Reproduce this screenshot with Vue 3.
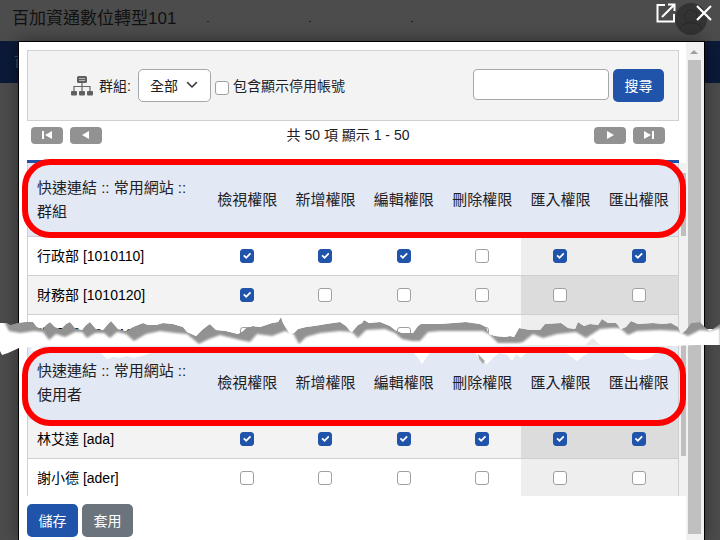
<script setup>
import { ref, reactive } from 'vue'

const actions = ['檢視權限', '新增權限', '編輯權限', '刪除權限', '匯入權限', '匯出權限']

const sections = reactive([
  {
    title: '快速連結 :: 常用網站 :: 群組',
    kind: 'groups',
    rows: [
      { name: '行政部 [1010110]', allowed: [true, true, true, false, true, true] },
      { name: '財務部 [1010120]', allowed: [true, false, false, false, false, false] },
      { name: '資訊部 [1010130]', allowed: [false, false, false, false, false, false] }
    ]
  },
  {
    title: '快速連結 :: 常用網站 :: 使用者',
    kind: 'users',
    rows: [
      { name: '林艾達 [ada]', allowed: [true, true, true, true, true, true] },
      { name: '謝小德 [ader]', allowed: [false, false, false, false, false, false] }
    ]
  }
])

const group = ref('all')
const includeDisabled = ref(false)
const keyword = ref('')
</script>

<template>
  <div class="page">
    <header class="site-header">
      <span class="site-title">百加資通數位轉型101</span>
      <span class="dots"><i></i><i></i><i></i></span>
      <svg class="avatar" viewBox="0 0 32 32" aria-hidden="true">
        <circle cx="16" cy="16" r="16" fill="#333" />
        <circle cx="16" cy="13" r="6" fill="none" stroke="#2a2a2a" />
        <path d="M5 26c2-5 6-6 11-6s9 1 11 6" fill="none" stroke="#2a2a2a" />
      </svg>
    </header>
    <nav class="site-nav">首頁</nav>

    <section class="dialog" role="dialog">
      <div class="window-actions">
        <button type="button" aria-label="在新視窗開啟">
          <svg width="20" height="20" viewBox="0 0 20 20" fill="none" stroke="#fff" stroke-width="2">
            <path d="M9 2H1.500V18.500H18V11M12 1.500H18.500V8M18 2L6 14" />
          </svg>
        </button>
        <button type="button" aria-label="關閉">
          <svg width="16" height="16" viewBox="0 0 16 16" fill="none" stroke="#fff" stroke-width="2.200">
            <path d="M1 1L15 15M15 1L1 15" />
          </svg>
        </button>
      </div>

      <div class="content">
        <form class="filters" @submit.prevent>
          <svg class="org" width="22" height="20" viewBox="0 0 22 20" aria-hidden="true">
            <rect x="6" y="0" width="10" height="7" rx="1.500" fill="#606060" />
            <path d="M8 2.500h6M8 4.500h6" stroke="#b5b5b5" />
            <path d="M11 7v8M3 15v-4.500h16V15" fill="none" stroke="#666" stroke-width="1.200" />
            <g fill="#606060">
              <rect x="0" y="15" width="6" height="4.500" rx="1" />
              <rect x="8" y="15" width="6" height="4.500" rx="1" />
              <rect x="16" y="15" width="6" height="4.500" rx="1" />
            </g>
          </svg>
          <label class="group-label" for="group">群組:</label>
          <span class="select">
            <select id="group" v-model="group">
              <option value="all">全部</option>
            </select>
            <svg width="12" height="8" viewBox="0 0 12 8" fill="none" stroke="#333a40" stroke-width="1.600" stroke-linecap="round" stroke-linejoin="round">
              <path d="M1.500 1.500L6 6L10.500 1.500" />
            </svg>
          </span>
          <input id="disabled" v-model="includeDisabled" class="check low" type="checkbox" />
          <label class="grow" for="disabled">包含顯示停用帳號</label>
          <input v-model="keyword" class="keyword" type="text" aria-label="搜尋" />
          <button class="btn primary" type="submit">搜尋</button>
        </form>

        <div class="pager">
          <button type="button" aria-label="第一頁">
            <svg width="12" height="8" viewBox="0 0 12 8"><path d="M1 0h2v8H1zM11 0v8L4 4z" fill="#fff" /></svg>
          </button>
          <button type="button" aria-label="上一頁">
            <svg width="8" height="8" viewBox="0 0 8 8"><path d="M7 0v8L0 4z" fill="#fff" /></svg>
          </button>
          <span class="count">共 50 項 顯示 1 - 50</span>
          <button type="button" aria-label="下一頁">
            <svg width="8" height="8" viewBox="0 0 8 8"><path d="M1 0v8L8 4z" fill="#fff" /></svg>
          </button>
          <button type="button" aria-label="最後一頁">
            <svg width="12" height="8" viewBox="0 0 12 8"><path d="M9 0h2v8H9zM1 0v8l7-4z" fill="#fff" /></svg>
          </button>
        </div>

        <div class="permissions">
          <div class="tables">
            <div v-for="section in sections" :key="section.kind" class="block" :class="section.kind">
              <table>
                <thead>
                  <tr>
                    <th class="name" scope="col">{{ section.title }}</th>
                    <th v-for="action in actions" :key="action" scope="col">{{ action }}</th>
                  </tr>
                </thead>
                <tbody>
                  <tr v-for="row in section.rows" :key="row.name">
                    <td class="name">{{ row.name }}</td>
                    <td v-for="(action, i) in actions" :key="action" :class="{ transfer: i > 3 }">
                      <input v-model="row.allowed[i]" class="check" type="checkbox" :aria-label="row.name + ' ' + action" />
                    </td>
                  </tr>
                </tbody>
              </table>
            </div>
          </div>
          <div class="inner-track"><i class="upper"></i><i class="lower"></i></div>
        </div>

        <footer class="footer">
          <button class="btn primary" type="button">儲存</button>
          <button class="btn secondary" type="button">套用</button>
        </footer>
      </div>

      <div class="scrollbar" aria-hidden="true">
        <svg width="8" height="4" viewBox="0 0 8 4"><path d="M4 0l4 4H0z" fill="#a0a0a0" /></svg>
        <i></i>
      </div>
    </section>

    <!-- Torn gap between the two parts of the list -->
    <svg class="tear" viewBox="0 315 720 55" preserveAspectRatio="none" aria-hidden="true">
      <defs>
        <filter id="soft" x="-5%" y="-40%" width="110%" height="180%"><feGaussianBlur stdDeviation="0.800" /></filter>
        <path
          id="rip"
          d="M0 323L7 323L10 325L17 323L25 322L33 322L37 327L43 329L46 325L50 322L55 327L61 329L66 324L70 322L75 328L82 330L86 325L90 322L96 329L103 330L108 324L111 321L118 329L126 331L133 327L143 323L148 325L156 325L163 323L173 324L183 327L187 332L196 336L202 330L207 326L210 324L216 330L226 331L238 334L243 331L246 328L253 326L260 327L266 325L272 323L278 322L281 317L283 323L286 328L290 334L294 333L298 329L306 327L314 326L326 324L333 323L340 322L346 326L350 331L352 332L358 325L362 323L364 320L369 323L380 322L390 326L395 330L402 333L413 333L418 326L421 324L440 324L466 322L480 324L486 327L489 334L495 336L505 337L510 336L514 337L519 328L530 330L540 330L545 324L561 323L568 328L575 329L578 322L584 326L590 324L598 325L602 319L608 323L616 323L621 329L626 327L631 321L638 324L653 323L663 324L671 323L678 327L681 334L686 330L691 323L700 322L706 328L710 331L720 324V345H0Z"
        />
        <clipPath id="cut"><use href="#rip" /></clipPath>
      </defs>
      <path class="paper" d="M5 324L38 330L49 337L65 335L75 330L87 336L100 331L110 336L121 331L134 338L148 331L176 331L187 333L199 343L209 337L238 337L250 341L260 332L278 334L286 329L295 338L299 343L306 336L320 332L350 331L358 337L364 329L382 328L395 332L405 338L414 341L423 333L440 330L480 330L489 334L500 343L522 343L533 333L550 336L570 333L586 336L600 328L620 327L630 333L645 329L678 331L688 336L700 329L720 329V344L672 346L560 345L220 345L60 345L19 348L8 353L2 355L0 351V323Z" />
      <g clip-path="url(#cut)">
        <use href="#rip" fill="#929292" />
        <path class="paper" filter="url(#soft)" d="M-5 318L5 323L9 331L20 333L34 331L43 332L49 340L56 334L65 337L75 332L82 332L87 338L95 333L104 333L110 338L117 332L126 334L134 341L146 334L160 331L176 333L187 334L199 344L209 339L220 335L240 340L250 342L257 334L272 336L285 331L293 333L299 344L306 337L320 333L340 331L352 332L358 338L366 330L385 329L395 333L402 339L412 341L420 341L428 332L440 331L470 331L483 331L489 334L498 343L518 343L523 342L533 334L543 338L557 334L576 332L586 338L600 329L612 328L620 328L628 335L637 331L660 330L678 331L688 336L700 330L710 331L720 328V350H-5Z" />
      </g>
      <path fill="#e9e9ed" d="M585 345L593 338L600 345Z" />
      <path class="paper" d="M30 351L34 344L43 349ZM101 353L107 359L113 357L120 358L127 356L134 358L142 356L151 353ZM414 353L418 358L422 364L426 358L430 353ZM475 353L480 360L487 364L493 358L499 353L507 355L512 361L516 354L521 358L526 353ZM566 353L573 358L577 361L583 356L589 353ZM623 353L631 359L641 360L650 358L656 353Z" />
      <path fill="#aaa" d="M478 354L485 361L483 364L479 359Z" />
    </svg>

    <div class="mark first"></div>
    <div class="mark second"></div>
  </div>
</template>

<style>
body {
  margin: 0;
  background: #4c4c4c;
}
</style>

<style scoped>
* {
  box-sizing: border-box;
}

.page {
  position: relative;
  min-height: 100vh;
  overflow: hidden;
  color: #1d2125;
  background: #4c4c4c;
  font: 14px/20px "Liberation Sans", "Noto Sans CJK TC", sans-serif;
}

button,
input,
select {
  margin: 0;
  font: inherit;
}

.site-header {
  display: flex;
  align-items: center;
  height: 41px;
  padding: 0 13px 4px 12px;
}

.site-title {
  color: #111;
  font-size: 17px;
  line-height: 24px;
}

.dots {
  display: flex;
  flex: 1;
  gap: 100px;
  padding: 6px 0 0 31px;
}

.dots i {
  width: 2px;
  height: 1px;
  background: #1d1d50;
}

.avatar {
  width: 32px;
  height: 32px;
}

.site-nav {
  height: 42px;
  padding: 10px 14px;
  color: #45506a;
  background: #0b1a38;
}

.dialog {
  position: absolute;
  inset: 41px 15px 0 18px;
  display: flex;
  border: 1px solid #000;
  border-bottom: 0;
  background: #fff;
  box-shadow: 0 0 16px rgba(0, 0, 0, 0.4);
}

.window-actions {
  position: absolute;
  top: -39px;
  right: -8px;
  display: flex;
  align-items: center;
  gap: 20px;
}

.window-actions button {
  display: flex;
  padding: 0;
  border: 0;
  background: none;
}

.content {
  flex: 1;
  min-width: 0;
  padding: 8px 0 0 8px;
}

.filters {
  display: flex;
  align-items: center;
  height: 71px;
  margin-right: 7px;
  padding: 0 14px 0 43px;
  border: 1px solid #cfd1d4;
  background: #f3f3f3;
}

.group-label {
  margin: 0 7px 0 6px;
}

.select {
  position: relative;
  display: flex;
  width: 73px;
  margin-right: 4px;
}

.select select {
  width: 100%;
  height: 33px;
  padding: 0 11px;
  appearance: none;
  border: 1px solid #a5a7aa;
  border-radius: 5px;
  color: #1d2125;
  background: #fff;
}

.select svg {
  position: absolute;
  top: 12px;
  right: 13px;
  pointer-events: none;
}

.check {
  display: block;
  flex: none;
  width: 14px;
  height: 14px;
  appearance: none;
  border: 1px solid #a0a0a0;
  border-radius: 3px;
  background: #fff;
}

.check:checked {
  border-color: #2054aa;
  background: #2054aa;
}

.check:checked::after {
  display: block;
  width: 8px;
  height: 8px;
  margin: 2px auto 0;
  background: #fff;
  clip-path: polygon(0 50%, 15% 34%, 38% 56%, 84% 10%, 100% 26%, 38% 86%);
  content: "";
}

.low {
  margin-top: 4px;
}

.grow {
  flex: 1;
  margin-left: 4px;
}

.keyword {
  width: 136px;
  height: 31px;
  margin: 0 4px 2px 0;
  padding: 0 8px;
  border: 1px solid #a5a7aa;
  border-radius: 4px;
  background: #fff;
}

.btn {
  width: 51px;
  height: 33px;
  padding: 0;
  border: 0;
  border-radius: 5px;
  color: #fff;
}

.primary {
  background: #2054aa;
}

.secondary {
  background: #6b747d;
}

.pager {
  display: flex;
  align-items: center;
  gap: 7px;
  height: 28px;
  margin-right: 21px;
  padding-left: 4px;
}

.pager button {
  display: flex;
  align-items: center;
  justify-content: center;
  width: 32px;
  height: 17px;
  padding: 0;
  border: 0;
  border-radius: 4px;
  background: #929292;
}

.count {
  flex: 1;
  text-align: center;
}

.permissions {
  display: grid;
  grid-template-columns: 1fr 7px;
  margin-top: 11px;
}

.tables {
  border-top: 3px solid #1f50a5;
}

.block {
  border: solid #cfd0d6;
  border-width: 0 1px;
}

.users {
  position: relative;
  margin-top: -8px;
}

table {
  width: 100%;
  table-layout: fixed;
  border-spacing: 0;
}

th,
td {
  height: 39px;
  padding: 0;
  border-bottom: 1px solid #cfd0d4;
  font-weight: 400;
  text-align: center;
}

th {
  height: 74px;
  background: #e2e8f4;
  font-size: 15px;
  line-height: 24px;
}

.name {
  width: 180px;
  padding: 0 9px;
  text-align: left;
}

td {
  color: #000;
  background: #fff;
}

td .check {
  margin: 0 auto;
}

td.transfer {
  background: #eee;
}

.groups tr:nth-child(even) td,
.users tr:nth-child(odd) td {
  background: #f3f3f3;
}

.groups tr:nth-child(even) td.transfer,
.users tr:nth-child(odd) td.transfer {
  background: #dcdcdc;
}

.users tr:last-child td {
  height: 37px;
  border-bottom: 0;
}

.inner-track {
  display: flex;
  flex-direction: column;
  justify-content: space-between;
  margin-top: 3px;
  padding: 10px 0 40px 2px;
  background: #f1f1f1;
}

.inner-track i {
  background: #bfbfbf;
}

.upper {
  height: 63px;
}

.lower {
  height: 111px;
}

.footer {
  display: flex;
  gap: 4px;
  margin-top: 8px;
}

.scrollbar {
  display: flex;
  flex-direction: column;
  align-items: center;
  gap: 6px;
  width: 18px;
  padding: 8px 2px 6px 0;
  background: #f1f1f1;
}

.scrollbar svg {
  flex: none;
}

.scrollbar i {
  flex: 1;
  width: 13px;
  background: #c0c0c0;
}

.tear {
  position: absolute;
  top: 315px;
  left: 0;
  width: 100%;
  height: 55px;
}

.paper {
  fill: #fff;
}

.mark {
  position: absolute;
  right: 34px;
  left: 22px;
  height: 79px;
  border: 6px solid #f00;
  border-radius: 28px;
  pointer-events: none;
}

.first {
  top: 159px;
}

.second {
  top: 347px;
}

.users th {
  border-bottom: 0;
}
</style>
